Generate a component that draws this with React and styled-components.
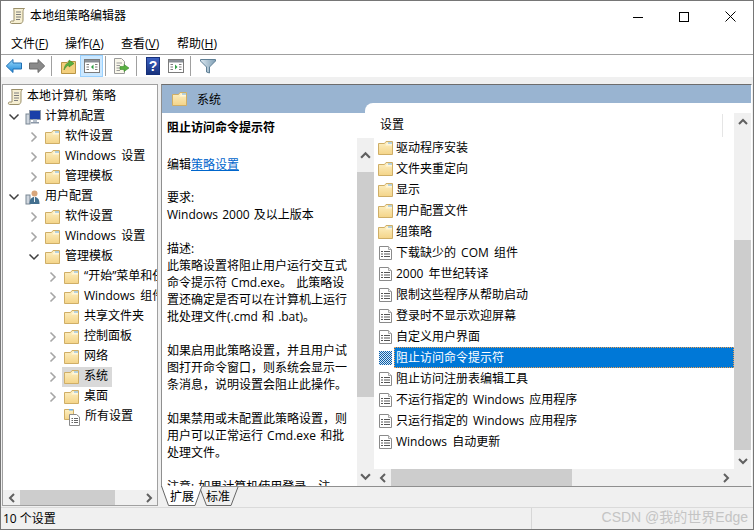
import React from "react";
import styled, { createGlobalStyle } from "styled-components";

const Global = createGlobalStyle`
  html, body { margin: 0; padding: 0; background: #f0f0f0; }
  * { box-sizing: border-box; }
`;

const Win = styled.div`
  width: 754px; height: 530px; display: flex; flex-direction: column; overflow: hidden;
  background: #f0f0f0; border: 1px solid #767676;
  font: 12px/20px "Open Sans", "Noto Sans CJK SC", sans-serif; color: #000; word-spacing: 2px;
`;
const TitleBar = styled.div`
  height: 29px; background: #fff; display: flex; align-items: center; padding: 1px 0 0 8px; flex: none;
`;
const TitleText = styled.span`margin-left: 3px; flex: 1;`;
const WinBtns = styled.div`display: flex; height: 29px;`;
const WinBtn = styled.div`width: 46px; display: flex; align-items: center; justify-content: center; padding-top: 1px;`;
const MenuBar = styled.div`
  height: 25px; background: #fff; display: flex; padding: 3px 0 0 10px; gap: 10px; flex: none;
  border-bottom: 1px solid #a0a0a0; align-items: center;
`;
const MenuItem = styled.span`width: ${p => p.$w}px; white-space: nowrap; u { text-decoration: underline; }`;
const ToolBar = styled.div`
  height: 22px; background: #fff; display: flex; align-items: center; padding-left: 4px; flex: none;
`;
const ToolBtn = styled.div`
  width: ${p => p.$w || 23}px; height: 22px; display: flex; align-items: center; justify-content: center; margin-right: ${p => p.$mr || 0}px;
  ${p => p.$on && "background:#cce8ff;border:1px solid #99d1ff;"}
`;
const ToolSep = styled.div`width: 1px; height: 20px; background: #a0a0a0; margin: 0 ${p => p.$r}px 0 ${p => p.$l}px;`;
const Main = styled.div`
  flex: 1; min-height: 0; display: flex; gap: 3px; padding: 7px 1px 0 1px; background: #f0f0f0;
`;
const LeftPane = styled.div`
  width: 156px; height: 422px; background: #fff; border: 1px solid #a0a0a0;
  display: flex; flex-direction: column; flex: none;
`;
const Tree = styled.div`flex: 1; min-height: 0; overflow: hidden; padding-top: 2px;`;
const TreeRow = styled.div`height: 20px; display: flex; align-items: center; padding-left: ${p => p.$pad}px; white-space: nowrap;`;
const Chev = styled.div`width: 12px; height: 12px; flex: none; display: flex; margin-right: 3px;`;
const TreeItem = styled.div`
  display: flex; align-items: center; height: 20px; padding: 0 4px 0 2px;
  ${p => p.$sel && "background:#d9d9d9;"}
`;
const TreeLabel = styled.span`margin: 0 0 2px ${p => p.$ml}px;`;
const RightCol = styled.div`flex: 1; min-width: 0; display: flex; flex-direction: column;`;
const RightPane = styled.div`
  height: 403px; background: #fff; border: 1px solid #8f8f8f; border-top-color: #6d6d6d; border-right: 1px solid #fff;
  flex: none; display: flex; flex-direction: column;
`;
const Header = styled.div`
  height: 28px; background: #99b4d1; flex: none; display: flex; align-items: center; padding-left: 10px;
`;
const HeaderText = styled.span`margin-left: 9px; padding-top: 2px;`;
const Body = styled.div`flex: 1; min-height: 0; display: flex;`;
const Desc = styled.div`
  width: 195px; flex: none; overflow: hidden; padding: 6px 0 0 5px; line-height: 17px; word-spacing: 1px;
  p { margin: 0 0 17px; }
  p:nth-child(1) { margin-bottom: 20px; }
  p:nth-child(2) { margin-bottom: 16px; }
  b { font-weight: 700; }
  a { color: #0066cc; text-decoration: underline; }
`;
const VBar = styled.div`
  width: 17px; flex: none; background: #f0f0f0; display: flex; flex-direction: column;
  margin-top: ${p => p.$mt || 0}px; position: relative; z-index: 2;
`;
const Arrow = styled.div`height: ${p => p.$h}px; flex: none; display: flex; align-items: ${p => p.$end ? "flex-end" : "center"}; justify-content: center; padding-bottom: ${p => p.$pb || 0}px;`;
const Thumb = styled.div`background: #cdcdcd; height: ${p => p.$h}px; margin-top: ${p => p.$t || 0}px; flex: none;`;
const Spacer = styled.div`flex: 1;`;
const ListPanel = styled.div`
  flex: 1; min-width: 0; margin: -10px 0 0 -9px; padding-left: 9px; background: #fff; border-top-left-radius: 8px; position: relative; z-index: 1;
  display: flex; flex-direction: column;
`;
const ListTopPad = styled.div`height: 10px; flex: none;`;
const ListMid = styled.div`flex: 1; min-height: 0; display: flex;`;
const ListBody = styled.div`flex: 1; min-width: 0; display: flex; flex-direction: column;`;
const ColHead = styled.div`height: 24px; flex: none; padding: 1px 0 0 6px; display: flex; line-height: 22px;`;
const ColName = styled.div`flex: 1; border-right: 1px solid #e5e5e5;`;
const ColRest = styled.div`width: 11px;`;
const Row = styled.div`height: 21px; display: flex; align-items: center; padding-left: 4px; white-space: nowrap;`;
const RowText = styled.span`
  flex: 1; height: 21px; line-height: 20px; padding: 1px 0 0 2px;
  ${p => p.$sel && "background:#0078d7;color:#fff;outline:1px dotted #f0a050;outline-offset:-1px;"}
`;
const HBar = styled.div`height: ${p => p.$h}px; flex: none; background: #f0f0f0; display: flex; align-items: stretch;`;
const HArrow = styled.div`width: ${p => p.$w}px; flex: none; display: flex; align-items: center; justify-content: center;`;
const HThumb = styled.div`width: ${p => p.$w}px; background: #cdcdcd; flex: none;`;
const Tabs = styled.div`height: 21px; display: flex; flex: none; margin-top: -1px; position: relative; z-index: 3;`;
const Tab = styled.div`
  position: relative; z-index: ${p => p.$z}; width: ${p => p.$w}px; height: 21px; margin-left: ${p => p.$ml || 0}px;
  padding-left: ${p => p.$pl}px; line-height: 21px;
  svg { position: absolute; left: 0; top: 0; }
  span { position: relative; }
`;
const Status = styled.div`
  height: 22px; flex: none; display: flex; border-top: 1px solid #dadada; background: #f0f0f0; line-height: 21px; position: relative;
`;
const StatusLeft = styled.div`width: 531px; padding-left: 2px; border-right: 1px solid #d7d7d7; flex: none; word-spacing: 0;`;
const Watermark = styled.div`
  position: absolute; right: 5px; top: -1px; font-size: 14px; line-height: 20px; color: #c4c4c4; white-space: nowrap; word-spacing: 0;
  font-family: "Liberation Sans", "Noto Sans CJK SC", sans-serif;
`;

const FolderDefs = () => (
  <svg width="0" height="0" style={{ position: "absolute" }}>
    <defs>
      <linearGradient id="fold" x1="0" y1="0" x2="0" y2="1">
        <stop offset="0" stopColor="#fdf0c4" />
        <stop offset="1" stopColor="#f4d488" />
      </linearGradient>
    </defs>
  </svg>
);
const Folder = () => (
  <svg width="16" height="16" viewBox="0 0 16 16" style={{ flex: "none" }}>
    <path d="M.5 3.5 V14.5 H14.5 V1.5 H8 L6.5 3.5 Z" fill="url(#fold)" stroke="#cfae66" />
    <path d="M1 5.5 H7.5 L9 3 H14 V5.5 Z" fill="#fff6d8" />
    <path d="M10 2.5 H14 V3.5 H10Z" fill="#6fb1e8" />
  </svg>
);
const Policy = ({ sel }) => (
  <svg width="16" height="16" viewBox="0 0 16 16" style={{ flex: "none" }}>
    {sel ? (
      <>
        <defs>
          <pattern id="dith" width="2" height="2" patternUnits="userSpaceOnUse">
            <rect width="2" height="2" fill="#d8e8f6" />
            <rect width="1" height="1" fill="#0a5ea8" />
            <rect x="1" y="1" width="1" height="1" fill="#0a5ea8" />
          </pattern>
        </defs>
        <rect x="1" y="1" width="13" height="14" fill="url(#dith)" />
      </>
    ) : (
      <>
        <path d="M1.5 1.5 H10.5 L13.5 4.5 V14.5 H1.5Z" fill="#fff" stroke="#8a8a8a" />
        <path d="M10.5 1.5 V4.5 H13.5" fill="#eee" stroke="#a8a8a8" />
        <path d="M3 6.5 H5 M6 6.5 H12 M3 9 H5 M6 9 H12 M3 11.5 H5 M6 11.5 H12" stroke="#555" />
      </>
    )}
  </svg>
);
const ScrollIcon = () => (
  <svg width="18" height="18" viewBox="0 0 18 18" style={{ flex: "none" }}>
    <path d="M4.5 1.5 H15.5 C14 2.5 14 4 14 5 V13 C14 15 13 16.5 11 16.5 H2.5 C1 16.5 1 14 2.5 14 H5 V4 C5 2.5 4.5 2 4.5 1.5Z" fill="#f6efd2" stroke="#9a8f6a" />
    <path d="M7 5 H12 M7 7.5 H12 M7 10 H12 M7 12.5 H11" stroke="#7d7d7d" />
  </svg>
);
const ChevRight = () => (
  <svg width="12" height="12" viewBox="0 0 12 12"><path d="M3.5 1.5 L8 6 L3.5 10.5" fill="none" stroke="#a6a6a6" strokeWidth="1.6" /></svg>
);
const ChevDown = () => (
  <svg width="12" height="12" viewBox="0 0 12 12"><path d="M1.5 3.5 L6 8 L10.5 3.5" fill="none" stroke="#404040" strokeWidth="1.5" /></svg>
);
const Computer = () => (
  <svg width="16" height="16" viewBox="0 0 16 16" style={{ flex: "none" }}>
    <rect x="1" y="5" width="4" height="10" fill="#cfd6de" stroke="#7a8794" />
    <rect x="4.5" y="1.5" width="11" height="9" fill="#1a3fa8" stroke="#8c98a8" />
    <rect x="8" y="10.5" width="4" height="3" fill="#b9c2cc" />
    <rect x="6" y="13" width="8" height="1.5" fill="#8c98a8" />
  </svg>
);
const User = () => (
  <svg width="16" height="16" viewBox="0 0 16 16" style={{ flex: "none" }}>
    <rect x="1" y="6" width="4" height="9" fill="#cfd6de" stroke="#7a8794" />
    <circle cx="9.5" cy="4.5" r="3" fill="#d9a77c" />
    <path d="M4.5 15 C4.5 10 6.5 8 9.5 8 C12.5 8 14.5 10 14.5 15Z" fill="#44708f" />
    <path d="M9 8 L10 8 L10 13 L9 13Z" fill="#e8eef2" />
  </svg>
);
const AllSettings = () => (
  <svg width="18" height="18" viewBox="0 0 18 18" style={{ flex: "none" }}>
    <path d="M.5 1.5 H9.5 V11.5 H.5Z" fill="url(#fold)" stroke="#cfae66" />
    <path d="M5 1 H9 V2.5 H5Z" fill="#6fb1e8" />
    <path d="M5.5 6.5 H12.5 L15.5 9 V17.5 H5.5Z" fill="#fff" stroke="#8a8a8a" />
    <path d="M7.5 10.5 H9 M10 10.5 H14 M7.5 12.5 H9 M10 12.5 H14 M7.5 14.5 H9 M10 14.5 H14" stroke="#666" />
  </svg>
);
const Back = () => (
  <svg width="18" height="16" viewBox="0 0 18 16">
    <defs><linearGradient id="bk" x1="0" y1="0" x2="0" y2="1"><stop offset="0" stopColor="#9fdcfb" /><stop offset="1" stopColor="#1a86d8" /></linearGradient></defs>
    <path d="M1.3 8 L8 1.5 V5 H16.5 V11 H8 V14.5Z" fill="url(#bk)" stroke="#1f6fb3" />
  </svg>
);
const Forward = () => (
  <svg width="18" height="16" viewBox="0 0 18 16">
    <path d="M16.7 8 L10 1.5 V5 H1.5 V11 H10 V14.5Z" fill="#8a8a8a" stroke="#6a6a6a" />
  </svg>
);
const UpFolder = () => (
  <svg width="16" height="18" viewBox="0 0 16 18">
    <path d="M.5 5.5 V16.5 H14.5 V4.5 H7 L6 5.5 Z" fill="#f3cf7d" stroke="#b99545" />
    <path d="M3 13 C3.5 8.5 5.5 6 8 5.5 V3 L13 6.5 L8 10 V8 C6 8.5 4.5 10.5 3 13Z" fill="#58b040" stroke="#3b8a2a" strokeWidth=".6" />
  </svg>
);
const Pane = ({ side }) => (
  <svg width="16" height="14" viewBox="0 0 16 14">
    <rect x=".5" y=".5" width="15" height="13" fill="#fff" stroke="#7c7c7c" />
    <rect x="1" y="1" width="14" height="2.5" fill="#8a9097" />
    <path d="M2.5 5.5 H5 M2.5 8 H5 M2.5 10.5 H5 M11 5.5 H13.5 M11 8 H13.5 M11 10.5 H13.5" stroke="#7c7c7c" />
    <path d={side === "l" ? "M9.5 5.5 L7 8 L9.5 10.5Z" : "M7 5.5 L9.5 8 L7 10.5Z"} fill="#2f9e44" />
  </svg>
);
const Export = () => (
  <svg width="18" height="18" viewBox="0 0 18 18">
    <path d="M2.5 1.5 H9.5 L12.5 4.5 V16.5 H2.5Z" fill="#f9f7ea" stroke="#9a9a9a" />
    <path d="M4.5 6 H10 M4.5 8.5 H8 M4.5 11 H8 M4.5 13.5 H8" stroke="#9a9a9a" />
    <path d="M8 9.5 H12 V7.5 L17 11 L12 14.5 V12.5 H8Z" fill="#58b040" stroke="#3b8a2a" strokeWidth=".6" />
  </svg>
);
const Help = () => (
  <svg width="14" height="18" viewBox="0 0 14 18">
    <defs><linearGradient id="hp" x1="0" y1="0" x2="0" y2="1"><stop offset="0" stopColor="#3f63c4" /><stop offset="1" stopColor="#16307a" /></linearGradient></defs>
    <rect x=".5" y=".5" width="13" height="17" fill="url(#hp)" stroke="#16307a" />
    <text x="7" y="14" textAnchor="middle" fontSize="14" fontWeight="700" fontFamily="Liberation Sans" fill="#fff">?</text>
  </svg>
);
const Filter = () => (
  <svg width="16" height="16" viewBox="0 0 16 16">
    <defs><linearGradient id="fl" x1="0" y1="0" x2="1" y2="0"><stop offset="0" stopColor="#dbe7ef" /><stop offset="1" stopColor="#7f9fb5" /></linearGradient></defs>
    <path d="M.5 1.5 H15.5 V3 L9.5 9 V15 L6.5 14 V9 L.5 3Z" fill="url(#fl)" stroke="#5f7f95" />
  </svg>
);
const Sb = ({ dir, big }) => {
  const d = { u: "M1 7 L5 3 L9 7", d: "M1 3 L5 7 L9 3", l: "M7 1 L3 5 L7 9", r: "M3 1 L7 5 L3 9" }[dir];
  const k = big ? 11 : 10;
  return <svg width={k} height={k} viewBox="0 0 10 10"><path d={d} fill="none" stroke="#606060" strokeWidth="2" /></svg>;
};

const tree = [
  [0, null, "scroll", "本地计算机 策略"],
  [1, "d", "pc", "计算机配置"],
  [2, "r", "f", "软件设置"],
  [2, "r", "f", "Windows 设置"],
  [2, "r", "f", "管理模板"],
  [1, "d", "user", "用户配置"],
  [2, "r", "f", "软件设置"],
  [2, "r", "f", "Windows 设置"],
  [2, "d", "f", "管理模板"],
  [3, "r", "f", "“开始”菜单和任务栏"],
  [3, "r", "f", "Windows 组件"],
  [3, null, "f", "共享文件夹"],
  [3, "r", "f", "控制面板"],
  [3, "r", "f", "网络"],
  [3, "r", "f", "系统", true],
  [3, "r", "f", "桌面"],
  [3, null, "all", "所有设置"],
];
const pads = [2, 5, 25, 44];

const rows = [
  ["f", "驱动程序安装"], ["f", "文件夹重定向"], ["f", "显示"], ["f", "用户配置文件"], ["f", "组策略"],
  ["p", "下载缺少的 COM 组件"], ["p", "2000 年世纪转译"], ["p", "限制这些程序从帮助启动"], ["p", "登录时不显示欢迎屏幕"],
  ["p", "自定义用户界面"], ["s", "阻止访问命令提示符"], ["p", "阻止访问注册表编辑工具"],
  ["p", "不运行指定的 Windows 应用程序"], ["p", "只运行指定的 Windows 应用程序"], ["p", "Windows 自动更新"],
];

const TabShape = ({ w, fill, top }) => (
  <svg width={w} height="21" viewBox={`0 0 ${w} 21`}>
    <path d={`M0.5 ${top} L7.5 19.5 H${w - 8} L${w - 1} ${top}`} fill={fill} stroke="#666" />
  </svg>
);

export default function App() {
  return (
    <>
      <Global />
      <FolderDefs />
      <Win>
        <TitleBar>
          <ScrollIcon />
          <TitleText>本地组策略编辑器</TitleText>
          <WinBtns>
            <WinBtn><svg width="10" height="10" viewBox="0 0 10 10"><path d="M0 5.5 H10" stroke="#000" /></svg></WinBtn>
            <WinBtn><svg width="10" height="10" viewBox="0 0 10 10"><rect x=".5" y=".5" width="9" height="9" fill="none" stroke="#000" /></svg></WinBtn>
            <WinBtn><svg width="11" height="11" viewBox="0 0 11 11"><path d="M.5 .5 L10.5 10.5 M10.5 .5 L.5 10.5" stroke="#000" /></svg></WinBtn>
          </WinBtns>
        </TitleBar>
        <MenuBar>
          <MenuItem $w={44}>文件(<u>F</u>)</MenuItem>
          <MenuItem $w={46}>操作(<u>A</u>)</MenuItem>
          <MenuItem $w={46}>查看(<u>V</u>)</MenuItem>
          <MenuItem $w={46}>帮助(<u>H</u>)</MenuItem>
        </MenuBar>
        <ToolBar>
          <ToolBtn $w={18} $mr={5}><Back /></ToolBtn>
          <ToolBtn $w={18}><Forward /></ToolBtn>
          <ToolSep $l={5} $r={9} />
          <ToolBtn $w={16} $mr={3}><UpFolder /></ToolBtn>
          <ToolBtn $on><Pane side="l" /></ToolBtn>
          <ToolSep $l={2} $r={6} />
          <ToolBtn $w={18}><Export /></ToolBtn>
          <ToolSep $l={6} $r={9} />
          <ToolBtn $w={14} $mr={8}><Help /></ToolBtn>
          <ToolBtn $w={16}><Pane side="r" /></ToolBtn>
          <ToolSep $l={6} $r={9} />
          <ToolBtn $w={16}><Filter /></ToolBtn>
        </ToolBar>
        <Main>
          <LeftPane>
            <Tree>
              {tree.map(([lvl, chev, icon, label, sel], i) => (
                <TreeRow key={i} $pad={pads[lvl]}>
                  {lvl > 0 && <Chev>{chev === "d" ? <ChevDown /> : chev === "r" ? <ChevRight /> : null}</Chev>}
                  <TreeItem $sel={sel}>
                    {icon === "f" && <Folder />}
                    {icon === "scroll" && <ScrollIcon />}
                    {icon === "pc" && <Computer />}
                    {icon === "user" && <User />}
                    {icon === "all" && <AllSettings />}
                    <TreeLabel $ml={icon === "all" ? 3 : icon === "scroll" ? 2 : 4}>{label}</TreeLabel>
                  </TreeItem>
                </TreeRow>
              ))}
            </Tree>
            <HBar $h={15}>
              <HArrow $w={17}><Sb dir="l" /></HArrow>
              <HThumb $w={95} />
              <Spacer />
              <HArrow $w={17}><Sb dir="r" /></HArrow>
            </HBar>
          </LeftPane>
          <RightCol>
            <RightPane>
              <Header><Folder /><HeaderText>系统</HeaderText></Header>
              <Body>
                <Desc>
                  <p><b>阻止访问命令提示符</b></p>
                  <p>编辑<a>策略设置</a></p>
                  <p>要求:<br />Windows 2000 及以上版本</p>
                  <p>描述:<br />此策略设置将阻止用户运行交互式<br />命令提示符 Cmd.exe。 此策略设<br />置还确定是否可以在计算机上运行<br />批处理文件(.cmd 和 .bat)。</p>
                  <p>如果启用此策略设置，并且用户试<br />图打开命令窗口，则系统会显示一<br />条消息，说明设置会阻止此操作。</p>
                  <p>如果禁用或未配置此策略设置，则<br />用户可以正常运行 Cmd.exe 和批<br />处理文件。</p>
                  <p>注意: 如果计算机使用登录、注</p>
                </Desc>
                <VBar $mt={25}>
                  <Arrow $h={34}><Sb dir="u" big /></Arrow>
                  <Thumb $h={225} />
                  <Spacer />
                  <Arrow $h={24} $end $pb={4}><Sb dir="d" big /></Arrow>
                </VBar>
                <ListPanel>
                  <ListTopPad />
                  <ListMid>
                    <ListBody>
                      <ColHead><ColName>设置</ColName><ColRest /></ColHead>
                      {rows.map(([k, t], i) => (
                        <Row key={i}>
                          {k === "f" ? <Folder /> : <Policy sel={k === "s"} />}
                          <RowText $sel={k === "s"}>{t}</RowText>
                        </Row>
                      ))}
                    </ListBody>
                    <VBar>
                      <Arrow $h={17}><Sb dir="u" /></Arrow>
                      <Thumb $h={210} $t={110} />
                      <Spacer />
                      <Arrow $h={17}><Sb dir="d" /></Arrow>
                    </VBar>
                  </ListMid>
                  <HBar $h={17}>
                    <HArrow $w={17}><Sb dir="l" /></HArrow>
                    <HThumb $w={181} />
                    <Spacer />
                    <HArrow $w={17}><Sb dir="r" /></HArrow>
                    <HArrow $w={17} />
                  </HBar>
                </ListPanel>
              </Body>
            </RightPane>
            <Tabs>
              <Tab $w={42} $pl={9} $z={2}><TabShape w={42} fill="#fff" top={0} /><span>扩展</span></Tab>
              <Tab $w={40} $ml={-4} $pl={7} $z={1}><TabShape w={40} fill="#f0f0f0" top={1} /><span>标准</span></Tab>
            </Tabs>
          </RightCol>
        </Main>
        <Status>
          <StatusLeft>10 个设置</StatusLeft>
          <Watermark>CSDN @我的世界Edge</Watermark>
        </Status>
      </Win>
    </>
  );
}
